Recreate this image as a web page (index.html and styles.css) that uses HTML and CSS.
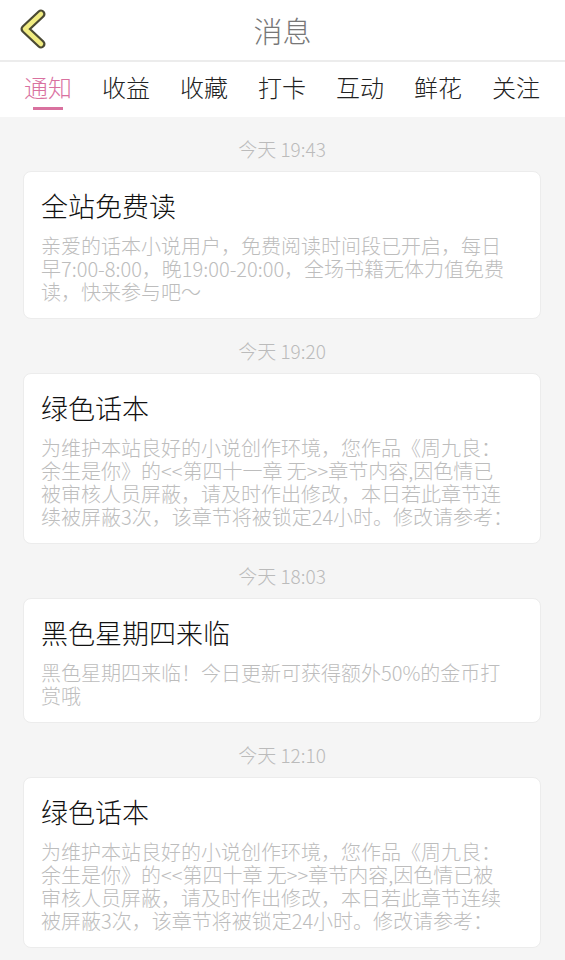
FILE: index.html
```html
<!DOCTYPE html>
<html lang="zh-CN">
<head>
  <meta charset="UTF-8" />
  <meta name="viewport" content="width=device-width, initial-scale=1" />
  <title>消息</title>
  <link rel="stylesheet" href="styles.css">
</head>
<body>
  <div class="top-bar">
    <a class="back" href="#">
      <svg width="40" height="56" viewBox="0 0 40 56">
        <polyline points="35,13 19,28 35,43" fill="none" stroke="#4b4a34" stroke-width="9" stroke-linecap="round" stroke-linejoin="round" />
        <polyline points="35,13 19,28 35,43" fill="none" stroke="#f1ec82" stroke-width="4.5" stroke-linecap="round" stroke-linejoin="round" />
      </svg>
    </a>
    <h1>消息</h1>
  </div>

  <div class="tabs">
    <div class="tab active">通知</div>
    <div class="tab">收益</div>
    <div class="tab">收藏</div>
    <div class="tab">打卡</div>
    <div class="tab">互动</div>
    <div class="tab">鲜花</div>
    <div class="tab">关注</div>
  </div>

  <div class="list">
    <div class="time">今天 19:43</div>
    <div class="card">
      <h3>全站免费读</h3>
      <p>亲爱的话本小说用户，免费阅读时间段已开启，每日早7:00-8:00，晚19:00-20:00，全场书籍无体力值免费读，快来参与吧～</p>
    </div>

    <div class="time">今天 19:20</div>
    <div class="card">
      <h3>绿色话本</h3>
      <p>为维护本站良好的小说创作环境，您作品《周九良：<br>余生是你》的&lt;&lt;第四十一章 无&gt;&gt;章节内容,因色情已<br>被审核人员屏蔽，请及时作出修改，本日若此章节连<br>续被屏蔽3次，该章节将被锁定24小时。修改请参考：</p>
    </div>

    <div class="time">今天 18:03</div>
    <div class="card">
      <h3>黑色星期四来临</h3>
      <p>黑色星期四来临！今日更新可获得额外50%的金币打赏哦</p>
    </div>

    <div class="time">今天 12:10</div>
    <div class="card">
      <h3>绿色话本</h3>
      <p>为维护本站良好的小说创作环境，您作品《周九良：<br>余生是你》的&lt;&lt;第四十章 无&gt;&gt;章节内容,因色情已被<br>审核人员屏蔽，请及时作出修改，本日若此章节连续<br>被屏蔽3次，该章节将被锁定24小时。修改请参考：</p>
    </div>
  </div>
</body>
</html>
```

FILE: styles.css
```css
body {
  margin: 0;
  background: #f5f5f5;
  font-family: "Noto Sans CJK SC", "Noto Sans", sans-serif;
  font-weight: 300;
}
.top-bar {
  height: 60px;
  background: #fff;
  display: flex;
  align-items: center;
  justify-content: center;
  position: relative;
  border-bottom: 2px solid #ececec;
}
.back {
  position: absolute;
  left: 6px;
  top: 1px;
}
.top-bar h1 {
  margin: 0;
  font-size: 29px;
  font-weight: 300;
  color: #777;
}
.tabs {
  background: #fff;
  height: 55px;
  display: flex;
  gap: 30px;
  padding: 0 24px;
}
.tab {
  font-size: 24px;
  line-height: 50px;
  color: #222;
  position: relative;
}
.tab.active {
  color: #d9719f;
}
.tab.active::after {
  content: "";
  position: absolute;
  left: 9px;
  right: 9px;
  top: 45px;
  height: 3px;
  background: #d9719f;
}
.list {
  padding: 0 24px 0 23px;
}
.time {
  text-align: center;
  font-size: 19px;
  line-height: 20px;
  padding: 22px 0 12px;
  color: #bbb;
}
.card {
  background: #fff;
  border: 1px solid #ececec;
  border-radius: 8px;
  padding: 18px 25px 15px 17px;
}
.card h3 {
  margin: 0;
  font-size: 27px;
  line-height: 32px;
  font-weight: 300;
  color: #111;
}
.card p {
  margin: 12px 0 0;
  font-size: 20px;
  line-height: 23px;
  color: #bdbdbd;
}
```
